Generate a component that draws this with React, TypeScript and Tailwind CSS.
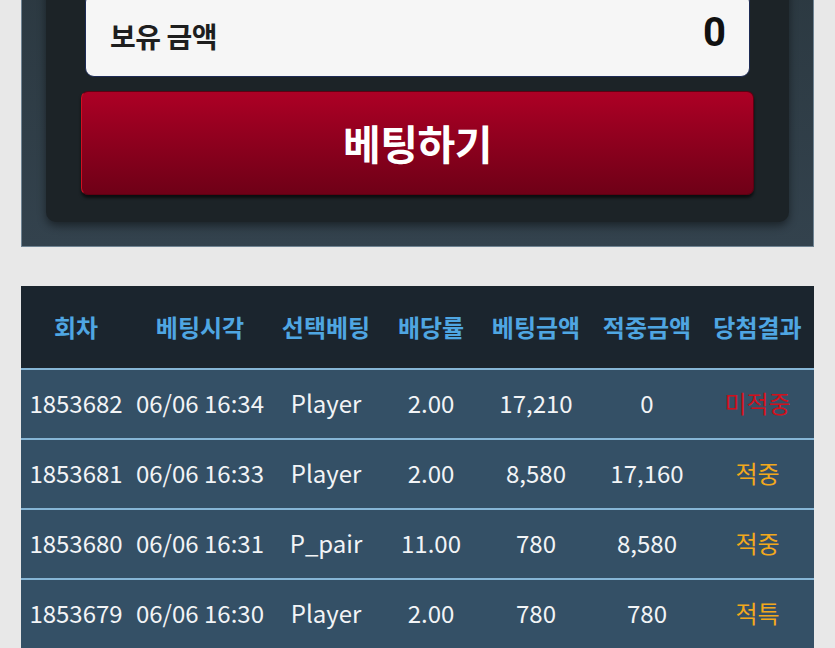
const rows = [
  { id: "1853682", time: "06/06 16:34", pick: "Player", odds: "2.00", bet: "17,210", win: "0", result: "미적중", lost: true },
  { id: "1853681", time: "06/06 16:33", pick: "Player", odds: "2.00", bet: "8,580", win: "17,160", result: "적중", lost: false },
  { id: "1853680", time: "06/06 16:31", pick: "P_pair", odds: "11.00", bet: "780", win: "8,580", result: "적중", lost: false },
  { id: "1853679", time: "06/06 16:30", pick: "Player", odds: "2.00", bet: "780", win: "780", result: "적특", lost: false },
];

const headers = ["회차", "베팅시각", "선택베팅", "배당률", "베팅금액", "적중금액", "당첨결과"];

const cols = "grid grid-cols-[110px_138px_114px_96px_114px_108px_113px]";

export default function App() {
  return (
    <div className="min-h-[648px] w-[835px] overflow-hidden bg-[#e8e8e8] font-['Noto_Sans_CJK_KR','Noto_Sans',sans-serif]">
      <div className="-mt-[42px] mx-[21px] w-[793px] border-x border-b border-[#6f8392] bg-gradient-to-b from-[#2b3840] to-[#33424d] px-[24px] pt-[10px] pb-[24px]">
        <div className="rounded-[10px] bg-[#1c2327] px-[35px] pt-[25px] pb-[27px] shadow-[0_4px_8px_rgba(0,0,0,0.45)]">
          <div className="mx-[4px] flex h-[84px] items-center justify-between rounded-[9px] border border-[#1d2b55] bg-[#f6f6f6] pl-[24px] pr-[23px] pt-[2px]">
            <span className="text-[28px] font-bold tracking-[-0.5px] text-[#1e1e1e]">보유 금액</span>
            <span className="-mt-[6px] font-['Roboto',sans-serif] text-[40px] font-bold text-[#111]">0</span>
          </div>
          <button className="mt-[14px] flex h-[104px] w-full items-center justify-center rounded-[7px] border border-[#5e0012] border-l-[#d01020] bg-gradient-to-b from-[#ad0025] to-[#6f0017] shadow-[0_3px_3px_rgba(0,0,0,0.6)]">
            <span className="text-[41px] font-bold tracking-[-0.5px] text-white">베팅하기</span>
          </button>
        </div>
      </div>

      <div className="mx-[21px] mt-[39px] w-[793px]">
        <div className={`${cols} h-[84px] items-center border-b-2 border-[#86b6d6] bg-[#1b252e]`}>
          {headers.map((h) => (
            <div key={h} className="text-center text-[24px] font-bold text-[#4fa6e2]">
              {h}
            </div>
          ))}
        </div>
        {rows.map((r) => (
          <div
            key={r.id}
            className={`${cols} h-[70px] items-center border-b-2 border-[#86b6d6] bg-[#345066] pb-[3px] text-[24px] text-[#f2f4f6]`}
          >
            <div className="text-center">{r.id}</div>
            <div className="text-center">{r.time}</div>
            <div className="text-center">{r.pick}</div>
            <div className="text-center">{r.odds}</div>
            <div className="text-center">{r.bet}</div>
            <div className="text-center">{r.win}</div>
            <div className={`text-center ${r.lost ? "text-[#d0101c]" : "text-[#f2a81c]"}`}>{r.result}</div>
          </div>
        ))}
      </div>
    </div>
  );
}
